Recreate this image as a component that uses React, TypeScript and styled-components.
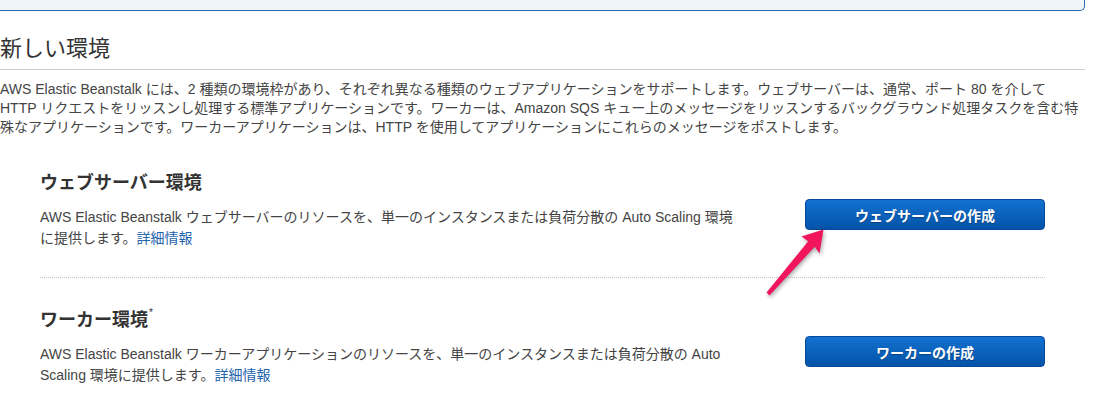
import styled, { createGlobalStyle } from "styled-components";

const GlobalStyle = createGlobalStyle`
  body {
    margin: 0;
    background: #fff;
    font-family: "Liberation Sans", "Noto Sans CJK JP", sans-serif;
    color: #444;
  }
`;

const Page = styled.div`
  position: relative;
  width: 1085px;
  height: 413px;
  overflow: hidden;
`;

const Notice = styled.div`
  box-sizing: border-box;
  width: 1085px;
  height: 11px;
  background: #eef6fc;
  border: 1px solid #2a6aa6;
  border-top: none;
  border-left: none;
  border-radius: 0 0 5px 0;
`;

const Title = styled.h2`
  margin: 23px 0 0;
  padding-bottom: 5px;
  border-bottom: 1px solid #cccccc;
  font-size: 22px;
  line-height: 30px;
  font-weight: 400;
  color: #333;
`;

const Intro = styled.p`
  margin: 10px 0 0;
  font-size: 14px;
  line-height: 19px;
`;

const Section = styled.section<{ $last?: boolean }>`
  display: flex;
  align-items: center;
  justify-content: space-between;
  width: 1005px;
  margin-left: 40px;
  margin-top: ${(p) => (p.$last ? "0" : "34px")};
  padding: ${(p) => (p.$last ? "30px 0 0" : "0 0 28px")};
  border-bottom: ${(p) => (p.$last ? "none" : "1px dotted #c4c4c4")};
`;

const TextCol = styled.div`
  width: 702px;
`;

const Heading = styled.h3`
  margin: 0;
  font-size: 18px;
  line-height: 24px;
  font-weight: 700;
  color: #333;

  sup {
    font-size: 10px;
    font-weight: 400;
    vertical-align: 10px;
    line-height: 0;
    margin-left: 1px;
  }
`;

const Desc = styled.p`
  margin: 12px 0 0;
  font-size: 14px;
  line-height: 21px;
`;

const Link = styled.a`
  display: inline-block;
  color: #1f65ad;
  text-decoration: none;
`;

const Button = styled.button`
  box-sizing: border-box;
  width: 240px;
  height: 31px;
  margin-top: 9px;
  border: 1px solid #04499a;
  border-radius: 4px;
  background: linear-gradient(#1271d0, #0453a8);
  color: #fff;
  font-family: "Noto Sans CJK JP", sans-serif;
  font-size: 14px;
  font-weight: 700;
  text-shadow: 0 1px 1px rgba(0, 0, 0, 0.3);
  cursor: pointer;
`;

const Arrow = styled.svg`
  position: absolute;
  left: 755px;
  top: 220px;
  width: 80px;
  height: 85px;
  filter: drop-shadow(1px 2px 2px rgba(0, 0, 0, 0.35));
`;

export default function App() {
  return (
    <Page>
      <GlobalStyle />
      <Notice />
      <Title>新しい環境</Title>
      <Intro>
        AWS Elastic Beanstalk には、2 種類の環境枠があり、それぞれ異なる種類のウェブアプリケーションをサポートします。ウェブサーバーは、通常、ポート 80 を介して
        HTTP リクエストをリッスンし処理する標準アプリケーションです。ワーカーは、Amazon SQS キュー上のメッセージをリッスンするバックグラウンド処理タスクを含む特殊なアプリケーションです。ワーカーアプリケーションは、HTTP を使用してアプリケーションにこれらのメッセージをポストします。
      </Intro>

      <Section>
        <TextCol>
          <Heading>ウェブサーバー環境</Heading>
          <Desc>
            AWS Elastic Beanstalk ウェブサーバーのリソースを、単一のインスタンスまたは負荷分散の Auto Scaling 環境に提供します。<Link href="#">詳細情報</Link>
          </Desc>
        </TextCol>
        <Button>ウェブサーバーの作成</Button>
      </Section>

      <Section $last>
        <TextCol>
          <Heading>
            ワーカー環境<sup>*</sup>
          </Heading>
          <Desc>
            AWS Elastic Beanstalk ワーカーアプリケーションのリソースを、単一のインスタンスまたは負荷分散の Auto Scaling 環境に提供します。<Link href="#">詳細情報</Link>
          </Desc>
        </TextCol>
        <Button>ワーカーの作成</Button>
      </Section>

      <Arrow viewBox="755 220 80 85">
        <polygon
          fill="#f0155c"
          points="766.6,292.6 808.2,241.2 801.5,236.5 823.5,229.5 819.5,253.5 814.8,246.8 769.4,295.4"
        />
      </Arrow>
    </Page>
  );
}
